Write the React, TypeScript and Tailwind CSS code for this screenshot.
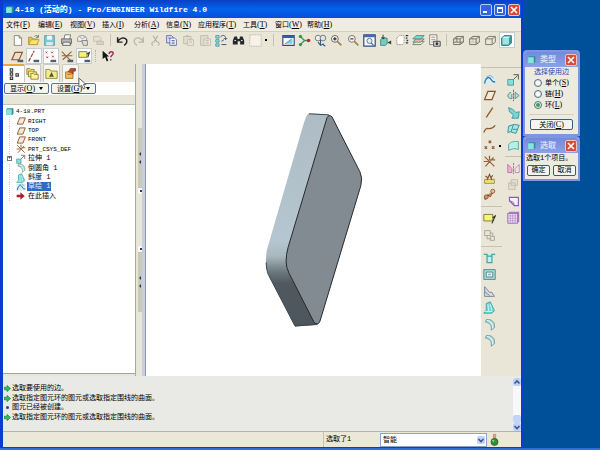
import React from 'react';
import clsx from 'clsx';

const icons: Record<string, React.ReactNode> = {
    new: <path d="M4 2h6l3 3v9H4zM10 2v3h3" fill="#fff" stroke="#777" />,
    open: <><path d="M2 13V4h4l1 2h6v7z" fill="#e3c44c" stroke="#a58c30" /><path d="M2 13l3-6h10l-3 6z" fill="#fbe36d" stroke="#b79d33" /><path d="M9 3c2-2 4-1 5 1M14 1v3h-3" fill="none" stroke="#4b7a55" /></>,
    save: <><path d="M2 2h12v12H2z" fill="#78cdd0" stroke="#4d9ca4" /><path d="M5 2h6v5H5z" fill="#eefafa" /><path d="M4 10h8v4H4z" fill="#d6efef" /></>,
    print: <><path d="M5 6l1-5h7l-1 5" fill="#fff" stroke="#666" /><path d="M2 6h12v6H2z" fill="#bbb" stroke="#555" /><path d="M4 10h8l1 4H3z" fill="#eee" stroke="#555" /></>,
    mail: <><path d="M2 9V5c0-3 8-5 11 0v4z" fill="#eee" stroke="#888" /><path d="M7 8h7v6H9z" fill="#ddd" stroke="#777" /><path d="M4 3l4 3 4-3" fill="none" stroke="#999" /></>,
    link: <><path d="M2 3h7l2 2v4H2z" fill="#e4e1d2" stroke="#c0bdae" /><path d="M6 9h8v4H6z" fill="#d8d5c6" stroke="#bbb8a9" /></>,
    undo: <path d="M2 4v6h6M2 10c2-5 8-7 11-3 1 3 0 5-3 7" fill="none" stroke="#222" strokeWidth="1.8" />,
    redo: <path d="M14 4v6H8M14 10C12 5 6 3 3 7c-1 3 0 5 3 7" fill="none" stroke="#bab7a8" strokeWidth="1.6" />,
    cut: <path d="M5 2l5 8M11 2L6 10M5 14a2 2 0 1 1 1-4M11 14a2 2 0 1 0-1-4" fill="none" stroke="#b5b2a4" strokeWidth="1.3" />,
    copy: <><path d="M2 2h6l2 2v7H2z" fill="#dfe4f7" stroke="#4c5f9b" /><path d="M6 5h6l2 2v7H6z" fill="#fff" stroke="#4c5f9b" /><path d="M8 8h4M8 10h4M8 12h4M4 5h2" stroke="#4c5f9b" /></>,
    paste: <><path d="M2 3h9v9H2z" fill="#dfdccb" stroke="#b9b6a7" /><path d="M7 7h7v7H7zM9 9h3M9 11h3M5 2h3" fill="#efede2" stroke="#b9b6a7" /></>,
    pasteSpecial: <><path d="M2 2h9v12H2z" fill="#dfdccb" stroke="#b9b6a7" /><path d="M6 6h8v8H6zM8 8h4M8 10h4M8 12h4" fill="#efede2" stroke="#b9b6a7" /></>,
    regen: <><path d="M1 2h4v3H1zM1 7h4v3H1zM1 12h4v3H1z" fill="#a8e6e6" stroke="#3c8d96" /><path d="M7 4c1-3 5-3 6 0v3l-2-2M13 7l2-2M8 9l3-2M8 13h6" fill="none" stroke="#3b587f" strokeWidth="1.2" /></>,
    find: <><path d="M1 8l2-5h3l1 3h2l1-3h3l2 5v5h-5V9H7v4H1z" fill="#29292d" /><path d="M3 8h2M11 8h2" stroke="#ddd" strokeWidth="1.5" /></>,
    box: <path d="M1 1h14v14H1z" fill="#f5f2e7" stroke="#b8b5a7" strokeDasharray="2 1" />,
    view: <><path d="M1 2h14v12H1z" fill="#fff" stroke="#204f91" strokeWidth="1.4" /><path d="M1 2h14v3H1z" fill="#2466ae" /><path d="M4 12L13 6v6z" fill="#86cdda" /><path d="M4 12l8-6" stroke="#386aa0" /></>,
    spin: <><path d="M3 3l5 5-5 5M8 8h5" fill="none" stroke="#3d8f5b" strokeWidth="1.6" /><circle cx="3" cy="3" r="2" fill="#359256" /><circle cx="3" cy="13" r="2" fill="#359256" /><circle cx="13" cy="8" r="2.2" fill="#b32d2a" /></>,
    orient: <><circle cx="5" cy="5" r="3.5" fill="#eee" stroke="#666" /><circle cx="11" cy="5" r="3.5" fill="#dce5ef" stroke="#666" /><path d="M8 7v7M5 10l3 4 4-2M11 13l3 2" fill="none" stroke="#315a87" strokeWidth="1.3" /></>,
    zoomIn: <><circle cx="6" cy="6" r="4.2" fill="#f4f4ee" stroke="#68666a" strokeWidth="1.2" /><path d="M9 9l5 5" stroke="#a48442" strokeWidth="2" /><path d="M4 6h4M6 4v4" stroke="#222" strokeWidth="1.4" /></>,
    zoomOut: <><circle cx="6" cy="6" r="4.2" fill="#f4f4ee" stroke="#77757a" strokeWidth="1.2" /><path d="M9 9l5 5" stroke="#a48442" strokeWidth="2" /><path d="M4 6h4" stroke="#6b2222" strokeWidth="1.4" /></>,
    refit: <><path d="M1 1h14v14H1z" fill="#fff" stroke="#294c83" strokeWidth="1.5" /><path d="M1 1h14v3H1z" fill="#426ca5" /><circle cx="8" cy="8.5" r="3.2" fill="#dfebf5" stroke="#476287" /><path d="M10 11l3 3" stroke="#476287" strokeWidth="1.5" /></>,
    reorient: <><path d="M2 7l2-2h6v7l-2 2H2z" fill="#78cabd" stroke="#3c8177" /><path d="M5 1v5M3 4l2 2 2-2" fill="none" stroke="#244e40" strokeWidth="1.3" /><path d="M15 8v5l-5-2.500z" fill="#244e40" /></>,
    named: <><path d="M1 5l3-3h6v8l-2 3H1z" fill="#fdfdf6" stroke="#8b897e" strokeDasharray="2 1" /><path d="M12 2h3M12 5h2M13 8h2M12 11h3" stroke="#333" strokeWidth="1.6" /></>,
    layers: <><path d="M1 13l4-4h10l-4 4z" fill="#e6f2d6" stroke="#54806e" /><path d="M1 10l4-4h10l-4 4z" fill="#f5acac" stroke="#4b8378" /><path d="M1 6l4-4h10l-4 4z" fill="#7edccc" stroke="#3c8177" /></>,
    manager: <><path d="M2 1h9v12H2z" fill="#f9f7ef" stroke="#77746c" /><path d="M4 4h5M4 7h5M4 10h3" stroke="#977" /><path d="M7 9h8v6H7z" fill="#ddd" stroke="#333" /><circle cx="11" cy="12" r="1.7" fill="#333" /></>,
    wire: <path d="M2 6l4-3h8v7l-4 3H2zM2 6h8v7M10 6l4-3M6 3v7H2M6 10h8" fill="none" stroke="#777568" strokeWidth="1.2" />,
    hidden: <><path d="M6 3v7H2M6 10h8" stroke="#bcb9aa" fill="none" /><path d="M2 6l4-3h8v7l-4 3H2zM2 6h8v7M10 6l4-3" fill="none" stroke="#777568" strokeWidth="1.2" /></>,
    noHidden: <path d="M2 6l4-3h8v7l-4 3H2zM2 6h8v7M10 6l4-3" fill="none" stroke="#807d70" strokeWidth="1.2" />,
    shaded: <><path d="M2 5l3-3h9v9l-3 3H2z" fill="#3c9b9d" stroke="#22696e" /><path d="M3 5h8v8H3z" fill="#9de5e2" /><path d="M3 5l2-2h8l-2 2z" fill="#d2f7f2" /></>,
    planeEye: <><path d="M1 12L5 3h9l-4 9z" fill="#eadfca" stroke="#8b5539" strokeWidth="1.4" /><path d="M8 12h7v3H8z" fill="#555e6b" /></>,
    axisEye: <><path d="M2 14L9 1" stroke="#a54436" strokeWidth="1.5" strokeDasharray="5 1" /><path d="M8 12h7v3H8z" fill="#555e6b" /></>,
    pointsEye: <><path d="M2 2l2 2M4 2L2 4M9 2l2 2M11 2L9 4M3 8l2 2M5 8l-2 2M10 7l2 2M12 7l-2 2" stroke="#a33b31" strokeWidth="1.2" /><path d="M8 12h7v3H8z" fill="#555e6b" /></>,
    csysEye: <><path d="M1 2l12 12M13 2L2 12M1 7h13" stroke="#95603b" strokeWidth="1.3" /><path d="M8 12h7v3H8z" fill="#555e6b" /></>,
    noteEye: <><path d="M1 2h10v7H1z" fill="#f9f17a" stroke="#706c3d" /><path d="M11 5l3-2-2 6" fill="none" stroke="#333" strokeWidth="1.3" /><path d="M8 12h7v3H8z" fill="#555e6b" /></>,
    help: <><path d="M2 1v10l3-2 2 5 2-1-2-5h3z" fill="#161616" /><path d="M10 5c0-4 5-3 5-1s-3 3-3 5M12 11v2" fill="none" stroke="#9a2f68" strokeWidth="1.8" /></>,
    treeTab: <path d="M4 1h3v3H4zM4 6h3v3H4zM4 11h3v3H4zM11 7h3v3h-3z" fill="#fff" stroke="#333" strokeWidth="1.3" />,
    folders: <><path d="M1 2h4l1 1h4v6H1z" fill="#f3e271" stroke="#877a34" /><path d="M3 5h4l1 1h5v6H3z" fill="#f7e87a" stroke="#877a34" /><path d="M6 8h3l1 1h5v6H6z" fill="#fff29c" stroke="#877a34" /></>,
    favorite: <><path d="M1 3h5l1 2h8v9H1z" fill="#f6ed86" stroke="#867b37" /><path d="M8 6l2 4 1 2H5l1-2z" fill="#455943" /></>,
    connect: <><path d="M2 6h9v8H2z" fill="#f0c050" stroke="#9b642b" /><path d="M5 6l3-4h6v3h-3v4" fill="#c34a2e" stroke="#772f27" /><path d="M4 9h5" stroke="#864" /></>,
    plane: <path d="M2 13L6 3h9l-4 10z" fill="#f4ead9" stroke="#8b4f2c" strokeWidth="1.4" />,
    axis: <path d="M4 14L12 2" stroke="#93572f" strokeWidth="1.6" />,
    curve: <path d="M1 13C5 2 8 14 15 4" fill="none" stroke="#94572f" strokeWidth="1.6" />,
    points: <path d="M7 2l3 3M10 2L7 5M2 9l3 3M5 9l-3 3M11 9l3 3M14 9l-3 3" stroke="#8c552e" strokeWidth="1.5" />,
    csys: <path d="M2 2l12 12M13 3L3 14M1 8h6M9 6h6M8 1v5" stroke="#946038" strokeWidth="1.5" />,
    analysis: <><path d="M2 9h12v5H2z" fill="#eee071" stroke="#92883d" /><path d="M5 10l3-7 3 7M3 5l3 2M12 4l-2 3" fill="none" stroke="#81512f" strokeWidth="1.4" /></>,
    reference: <><path d="M2 14l4-5 3 1 4-7" fill="none" stroke="#7c4428" strokeWidth="2" /><circle cx="4" cy="11" r="2.5" fill="#c99567" stroke="#874f2e" /><circle cx="12" cy="4" r="2.5" fill="#e0c28c" stroke="#874f2e" /><circle cx="9" cy="8" r="2" fill="#c57f40" /></>,
    sketch: <><path d="M1 3h14v11H1z" fill="#dcecee" /><path d="M2 13C3 5 8 4 10 8s3 3 5 3" fill="none" stroke="#257caa" strokeWidth="1.6" /><path d="M4 5l5-2 4 3" fill="none" stroke="#7598b8" /></>,
    note: <><path d="M1 3h11v8H1z" fill="#f8f471" stroke="#676b36" /><path d="M12 7l3-2-4 9" fill="none" stroke="#333" strokeWidth="1.4" /></>,
    propagate: <path d="M2 2h7v6H2zM5 8v4h5M9 9h5v5H9zM9 5h3v4" fill="none" stroke="#aaa89c" strokeWidth="1.2" />,
    extrude: <><path d="M1 8h7v7H1z" fill="#85dfd8" stroke="#498f91" /><path d="M8 2h6v6M8 8l5-5" fill="none" stroke="#555b58" strokeWidth="1.2" /></>,
    revolve: <><path d="M8 1v14" stroke="#555" strokeDasharray="3 1" /><path d="M5 4C-1 6 0 12 6 12V6M10 4v8l5-4z" fill="#b5ddd9" stroke="#518084" /></>,
    sweep: <path d="M2 2l5 2 4 4 4-1-1 8H6l2-4-5-4z" fill="#74d7d4" stroke="#3c8a91" />,
    blend: <path d="M2 5l7-2 6 1-4 10-7-2-3 1zM5 12l3-9M7 9h6" fill="#a4e9e3" stroke="#3c9299" strokeWidth="1.2" />,
    style: <path d="M2 14V7c2-4 7-4 12-4v10c-4-2-8-1-12 1z" fill="#b6efe7" stroke="#4b9c9c" />,
    mirror: <><path d="M8 1v14" stroke="#856b7d" strokeDasharray="3 1" /><path d="M1 3l5 5v5H1z" fill="#f2b4da" stroke="#ba6098" /><path d="M15 3l-5 5v5h5z" fill="#f5dff0" stroke="#b782aa" /></>,
    merge: <path d="M5 2h8v7H5zM2 6h8v8H2z" fill="#e2dece" stroke="#bcb8aa" />,
    trim: <><path d="M3 3h11v10H9L3 7z" fill="#f6eefb" stroke="#8a5db5" strokeWidth="1.4" /><path d="M3 7l5 2 1 4" fill="none" stroke="#8a5db5" /></>,
    pattern: <><path d="M1 3l2-2h12v12l-2 2H1z" fill="#ad77c6" /><path d="M1 3h12v12H1z" fill="#f3e4fa" stroke="#8a62a2" /><path d="M4 3v12M7 3v12M10 3v12M1 6h12M1 9h12M1 12h12" stroke="#b797c8" /></>,
    hole: <path d="M1 3h4v10h6V3h4M5 5h6" fill="#c0f3ef" stroke="#35a9ad" strokeWidth="1.5" />,
    shell: <><path d="M1 2h14v12H1z" fill="#a7dcdc" stroke="#3f777b" /><path d="M4 5h8v6H4z" fill="#eefaf8" stroke="#3f777b" /><path d="M6 7h4v2H6z" fill="#87b7bf" /></>,
    rib: <path d="M2 2v12h12L11 9 8 9zM2 8l6 5" fill="#d8dce0" stroke="#75889b" strokeWidth="1.2" />,
    draft: <><path d="M4 3l5-2 5 11-3 3H1l3-4z" fill="#65dad6" stroke="#339aa3" /><path d="M6 4l1 8M9 4l2 8M2 13h9" stroke="#e4fffc" /></>,
    round: <><path d="M4 2c7-1 11 3 10 10l-4 3C11 8 8 6 3 5z" fill="#aadad6" stroke="#679397" /><path d="M5 3c5 1 7 4 7 10" fill="none" stroke="#fff" /></>,
    insert: <path d="M1 6h6V2l7 6-7 6v-4H1z" fill="#b31f29" />,
    message: <path d="M1 5h6V1l8 7-8 7v-4H1z" fill="#31bd63" stroke="#13793b" strokeWidth="1.5" />,
    part: <><path d="M2 4l2-2h11v10l-2 2H2z" fill="#378d94" /><path d="M2 4h10v10H2z" fill="#85e5df" /></>,
    status: <><path d="M6 1h4v7H6z" fill="#d99980" /><circle cx="8" cy="11" r="4.3" fill="#388d3d" stroke="#235b28" /><circle cx="6.5" cy="9.5" r="1.3" fill="#9adb91" /></>,
};

const Icon: React.FC<{ name: string; className?: string }> = ({ name, className = 'size-[13px]' }) => (
    <svg viewBox="0 0 16 16" className={clsx('block shrink-0', className)} aria-hidden="true">{icons[name]}</svg>
);

const ToolButton: React.FC<{ name: string; active?: boolean }> = ({ name, active }) => (
    <button
        aria-label={name}
        className={clsx('flex size-4 shrink-0 items-center justify-center', active && 'border border-[#c3cdd3] bg-white')}
    >
        <Icon name={name} />
    </button>
);

const ToolGroup: React.FC<{ names: string[]; active?: string[]; className: string }> = ({ names, active = [], className }) => (
    <div className={clsx('flex shrink-0 justify-between', className)}>
        {names.map((name, i) => <ToolButton key={i} name={name} active={active.includes(name)} />)}
    </div>
);

// Chinese caption followed by its underlined mnemonic
const Caption: React.FC<{ text: string; hotkey: string }> = ({ text, hotkey }) => (
    <>
        {text}
        <span className="font-['Liberation_Serif',serif] text-[8px]">(<u>{hotkey}</u>)</span>
    </>
);

const menus = [
    ['文件', 'F'], ['编辑', 'E'], ['视图', 'V'], ['插入', 'I'], ['分析', 'A'],
    ['信息', 'N'], ['应用程序', 'T'], ['工具', 'T'], ['窗口', 'W'], ['帮助', 'H'],
];

const features = [
    { icon: 'plane', text: 'RIGHT' },
    { icon: 'plane', text: 'TOP' },
    { icon: 'plane', text: 'FRONT' },
    { icon: 'csys', text: 'PRT_CSYS_DEF' },
    { icon: 'extrude', text: '拉伸 1', expandable: true },
    { icon: 'round', text: '倒圆角 1' },
    { icon: 'draft', text: '斜度 1' },
    { icon: 'sketch', text: '草绘 1', selected: true },
    { icon: 'insert', text: '在此插入' },
];

const messages = [
    { text: '选取要使用的边。', prompt: true },
    { text: '选取指定图元环的图元或选取指定围线的曲面。', prompt: true },
    { text: '图元已经被创建。', prompt: false },
    { text: '选取指定图元环的图元或选取指定围线的曲面。', prompt: true },
];

const CloseButton: React.FC = () => (
    <button aria-label="close" className="flex size-3 shrink-0 items-center justify-center rounded-xs border border-[#efc2bb] bg-[#d94a33]">
        <svg viewBox="0 0 8 8" className="size-2"><path d="M1 1l6 6M7 1L1 7" stroke="#fff" strokeWidth="1.6" /></svg>
    </button>
);

const TitleBar: React.FC = () => (
    <header className="flex h-[18px] shrink-0 items-center bg-linear-to-b from-[#0841c4] via-[#0561ee] to-[#0450d8] px-px pt-px">
        <Icon name="part" className="mx-px size-[9px]" />
        <h1 className="flex-1 font-['Liberation_Mono','Noto_Sans_CJK_SC',monospace] text-[8px] leading-3 font-bold whitespace-pre text-white">4-18 (活动的) - Pro/ENGINEER Wildfire 4.0</h1>
        <div className="flex gap-0.5">
            <button aria-label="minimize" className="flex size-3 items-end rounded-xs border border-[#b7cdf8] bg-[#2f65df] p-0.5">
                <span className="h-0.5 w-1 bg-white" />
            </button>
            <button aria-label="maximize" className="size-3 rounded-xs border border-[#b7cdf8] bg-[#2f65df] p-0.5">
                <span className="block size-1.5 border border-t-2 border-white" />
            </button>
            <CloseButton />
        </div>
    </header>
);

const ModelTree: React.FC = () => (
    <aside className="flex w-[133px] shrink-0 flex-col border-r border-[#9caab8]">
        <div className="flex h-[18px] shrink-0">
            <button aria-label="tree" className="flex w-[21px] items-center justify-center border-t-2 border-[#eda63a] bg-white">
                <Icon name="treeTab" />
            </button>
            {['folders', 'favorite', 'connect'].map((name) => (
                <button key={name} aria-label={name} className="mr-0.5 flex w-[17px] items-center justify-center rounded-t-xs border border-b-0 border-[#c9c9c1] bg-[#f6f5ee]">
                    <Icon name={name} />
                </button>
            ))}
        </div>
        <div className="flex h-[13px] shrink-0 items-center gap-0.5 bg-white px-px">
            {[['显示', 'O'], ['设置', 'G']].map(([text, key]) => (
                <button key={text} className="flex h-[11px] w-[45px] items-center justify-center gap-1 rounded-xs border border-[#5c7292] bg-[#f4f3ec]">
                    <span><Caption text={text} hotkey={key} /></span>
                    <span className="border-x-2 border-t-3 border-x-transparent border-t-black" />
                </button>
            ))}
        </div>
        <div className="h-[10px] shrink-0 border-b border-[#c5c2b2] bg-[#e8e6d8]" />
        <div className="mb-0.5 flex-1 border-b border-[#a4a49c] bg-white pt-0.5">
            <ul className="grid h-[94px] grid-rows-10">
                <li className="flex items-center gap-0.5 pl-0.5">
                    <Icon name="part" className="size-[9px]" />
                    <span className="text-[6px]">4-18.PRT</span>
                </li>
                {features.map(({ icon, text, expandable, selected }) => (
                    <li key={text} className="flex items-center">
                        <span className="flex w-[13px] shrink-0 justify-center">
                            {expandable
                                ? <button aria-label="expand" className="flex size-[5px] items-center justify-center border border-[#777] text-[5px] leading-none">+</button>
                                : <span className="h-[9px] border-l border-dotted border-[#ccc]" />}
                        </span>
                        <Icon name={icon} className="size-[10px]" />
                        <span className={clsx('ml-px px-px leading-[9px] whitespace-pre', selected && 'bg-[#316ac5] text-[#e2eaf8]', /^[A-Z]/.test(text) && 'text-[6px]')}>{text}</span>
                    </li>
                ))}
            </ul>
        </div>
    </aside>
);

const SplitterGrip: React.FC = () => (
    <div className="flex h-[60px] w-1 shrink-0 flex-col items-center justify-center gap-1 bg-[#c9cbb9]">
        <span className="border-y-2 border-r-2 border-y-transparent border-r-[#26365e]" />
        <span className="border-y-2 border-r-2 border-y-transparent border-r-[#26365e]" />
    </div>
);

const SplitterKnob: React.FC = () => (
    <span className="flex h-1.5 w-1 items-center justify-end rounded-full bg-white">
        <span className="size-0.5 bg-[#333e72]" />
    </span>
);

const Splitter: React.FC = () => (
    <div className="flex w-[10px] shrink-0 justify-between pl-0.5">
        <div className="flex flex-col items-center pt-16">
            <SplitterGrip />
            <SplitterKnob />
            <div className="h-[52px]" />
            <SplitterKnob />
            <SplitterGrip />
        </div>
        <div className="w-1 border-r border-[#8f98a8] bg-[#c9cde0]" />
    </div>
);

const Viewport: React.FC = () => (
    <main className="min-w-0 flex-1 bg-white">
        <svg viewBox="146 64 335 313" className="block size-full" role="img" aria-label="model">
            <defs>
                <linearGradient id="side" x1="0" y1="0" x2="0" y2="1">
                    <stop offset="0" stopColor="#aebcc4" />
                    <stop offset="0.6" stopColor="#b5c6d0" />
                    <stop offset="0.67" stopColor="#a9b8c0" />
                    <stop offset="0.75" stopColor="#68737a" />
                    <stop offset="0.8" stopColor="#50595f" />
                    <stop offset="1" stopColor="#4d565d" />
                </linearGradient>
            </defs>
            <path d="M308 114Q310 113 328 115L331 116L318 325L315 326L295 327L268 275Q265 266 266 257Q266 252 268 246L303 126Q306 116 308 114Z" fill="url(#side)" />
            <path d="M327 118Q329 114 332 117L360 172Q363 178 361 186L320 322Q318 327 314 323L289 274Q286 268 286 262Q286 255 288 248Z" fill="#828b92" stroke="#24292d" strokeWidth="1" />
            <path d="M309 114L329 115M266 263Q266 270 268 275L295 327L317 325" fill="none" stroke="#3d464c" />
        </svg>
    </main>
);

const FeatureToolbar: React.FC = () => (
    <div className="w-10 shrink-0 pt-[3px]">
        <div className="flex justify-between border-t border-[#c5c2b2] pt-[3px]">
            <div className="w-[21px]">
                <div className="flex">
                    <ToolGroup className="h-[132px] flex-col" names={['sketch', 'plane', 'axis', 'curve', 'points', 'csys', 'analysis', 'reference']} />
                    <span className="mt-[74px] ml-0.5 size-0.5 bg-black" />
                </div>
                <hr className="my-[3px] border-[#c5c2b2]" />
                <ToolGroup className="h-[33px] flex-col" names={['note', 'propagate']} />
                <hr className="my-[3px] border-[#c5c2b2]" />
                <ToolGroup className="h-[99px] flex-col" names={['hole', 'shell', 'rib', 'draft', 'round', 'round']} />
            </div>
            <div className="w-4">
                <ToolGroup className="h-[82px] flex-col" names={['extrude', 'revolve', 'sweep', 'blend', 'style']} />
                <hr className="my-[3px] border-[#c5c2b2]" />
                <ToolGroup className="h-[66px] flex-col" names={['mirror', 'merge', 'trim', 'pattern']} />
            </div>
        </div>
    </div>
);

const Chevron: React.FC<{ up?: boolean }> = ({ up }) => (
    <span className="flex size-2 shrink-0 items-center justify-center rounded-xs bg-[#bed1fa]">
        <svg viewBox="0 0 8 8" className="size-2"><path d={up ? 'M1.5 5.5L4 3l2.5 2.5' : 'M1.5 3L4 5.5 6.5 3'} fill="none" stroke="#3f5689" strokeWidth="1.6" /></svg>
    </span>
);

const MessageArea: React.FC = () => (
    <section className="flex h-[55px] shrink-0 justify-between bg-[#e9eae5]">
        <ul className="mt-2 grid h-[38px] grid-rows-4 pl-px">
            {messages.map(({ text, prompt }, i) => (
                <li key={i} className="flex items-center gap-px">
                    {prompt
                        ? <Icon name="message" className="size-[7px]" />
                        : <span className="mx-0.5 size-[3px] rounded-full bg-[#243d95]" />}
                    <span>{text}</span>
                </li>
            ))}
        </ul>
        <div className="mt-0.5 flex flex-col justify-between bg-[#f8f8f8]">
            <button aria-label="scroll up"><Chevron up /></button>
            <div>
                <div className="h-2 w-2 rounded-xs bg-[#c3d3fb]" />
                <button aria-label="scroll down" className="block"><Chevron /></button>
            </div>
        </div>
    </section>
);

const StatusBar: React.FC = () => (
    <footer className="flex h-4 shrink-0 items-center justify-end border-t border-[#b4b3a8] bg-[#ebe8d9] pr-5">
        <label htmlFor="filter" className="flex h-full w-[57px] items-center border-l border-[#c5c2b2] pl-0.5">选取了1</label>
        <div className="flex h-[14px] w-[107px] items-center border border-[#8ca4c6] bg-white pr-px">
            <select id="filter" className="h-3 min-w-0 flex-1 appearance-none bg-white pl-0.5 leading-3 outline-none">
                <option>智能</option>
            </select>
            <Chevron />
        </div>
        <Icon name="status" className="ml-px size-[13px]" />
    </footer>
);

const Dialog: React.FC<{ title: string; children: React.ReactNode }> = ({ title, children }) => (
    <section className="w-[57px] overflow-hidden rounded-t border-2 border-[#7f95e0] bg-[#edebdf]">
        <header className="flex h-[15px] items-center bg-linear-to-b from-[#7489dd] to-[#8ba2e5] pr-px pl-0.5">
            <Icon name="part" className="size-[9px]" />
            <h2 className="ml-1 flex-1 text-[8px] leading-3 font-bold text-[#d4dff8]">{title}</h2>
            <CloseButton />
        </header>
        {children}
    </section>
);

const dialogButton = 'flex h-[11px] items-center justify-center rounded-xs border border-[#40587c] bg-[#f5f4ee]';

const App: React.FC = () => (
    <div className="flex h-screen flex-col overflow-hidden bg-[#005099] font-['Liberation_Mono','Noto_Sans_CJK_SC',monospace] text-[7px] leading-[9px] text-black">
        <div className="flex min-h-0 flex-1">
            <div className="relative flex min-w-0 flex-1 flex-col border-r-2 border-b border-l-3 border-[#0b3bd2] bg-[#e9e6d7]">
                <TitleBar />
                <nav className="flex h-[13px] shrink-0 items-center bg-[#efede2] pl-[3px]">
                    {menus.map(([text, key]) => (
                        <button key={text} className={clsx('shrink-0 text-left whitespace-nowrap', text.length > 2 ? 'w-[45px]' : 'w-8')}>
                            <Caption text={text} hotkey={key} />
                        </button>
                    ))}
                </nav>
                <div className="flex h-[17px] shrink-0 items-center border-t border-[#cfd3bd] pl-1.5">
                    <ToolGroup className="w-[98px]" names={['new', 'open', 'save', 'print', 'mail', 'link']} />
                    <span className="mx-[3px] h-3 w-px bg-[#c5c2b2]" />
                    <ToolGroup className="w-[149px]" names={['undo', 'redo', 'cut', 'copy', 'paste', 'pasteSpecial', 'regen', 'find', 'box']} />
                    <span className="ml-0.5 size-0.5 bg-black" />
                    <span className="mx-1.5 h-3 w-px bg-[#c5c2b2]" />
                    <ToolGroup className="w-[163px]" names={['view', 'spin', 'orient', 'zoomIn', 'zoomOut', 'refit', 'reorient', 'named', 'layers', 'manager']} />
                    <span className="mx-[3px] h-3 w-px bg-[#c5c2b2]" />
                    <ToolGroup className="w-[65px]" names={['wire', 'hidden', 'noHidden', 'shaded']} active={['shaded']} />
                </div>
                <div className="flex h-4 shrink-0 items-center pl-1.5">
                    <ToolGroup className="w-[83px]" names={['planeEye', 'axisEye', 'pointsEye', 'csysEye', 'noteEye']} active={['axisEye', 'pointsEye', 'noteEye']} />
                    <span className="mx-[3px] h-3 border-l border-dotted border-[#b5b2a3]" />
                    <ToolButton name="help" />
                </div>
                <div className="flex min-h-0 flex-1">
                    <ModelTree />
                    <Splitter />
                    <Viewport />
                    <FeatureToolbar />
                </div>
                <MessageArea />
                <StatusBar />
                <svg viewBox="0 0 10 14" className="absolute top-[77px] left-[75px] h-[13px] w-[9px]" aria-hidden="true">
                    <path d="M1 1v10l3-2 2 4 2-1-2-4h3z" fill="#fff" stroke="#555" />
                </svg>
            </div>
            <div className="flex w-[77px] shrink-0 flex-col pt-[50px]">
                <Dialog title="类型">
                    <fieldset className="px-[9px] pt-px">
                        <legend className="float-left w-full text-center whitespace-nowrap text-[#2d47b5]">选择使用边</legend>
                        <div className="clear-both flex flex-col gap-px pt-px">
                            {[['单个', 'S'], ['链', 'H'], ['环', 'L']].map(([text, key]) => (
                                <label key={key} className="flex items-center gap-[3px] whitespace-nowrap">
                                    <input
                                        type="radio"
                                        name="edge"
                                        defaultChecked={key === 'L'}
                                        className="size-2 shrink-0 appearance-none rounded-full border border-[#4d7191] bg-white bg-clip-content p-px checked:bg-[#39a445]"
                                    />
                                    <span><Caption text={text} hotkey={key} /></span>
                                </label>
                            ))}
                        </div>
                    </fieldset>
                    <hr className="mx-1 mt-1 border-[#d2cfbf]" />
                    <button className={clsx(dialogButton, 'mx-auto my-1 w-[43px]')}>
                        <span><Caption text="关闭" hotkey="C" /></span>
                    </button>
                </Dialog>
                <Dialog title="选取">
                    <p className="px-px pt-px">选取1个项目。</p>
                    <div className="flex justify-between px-0.5 pt-0.5 pb-[3px]">
                        <button className={clsx(dialogButton, 'w-[23px]')}>确定</button>
                        <button className={clsx(dialogButton, 'w-[23px]')}>取消</button>
                    </div>
                </Dialog>
            </div>
        </div>
        <div className="h-0.5 shrink-0 bg-[#2b71d9]" />
    </div>
);

export default App;
